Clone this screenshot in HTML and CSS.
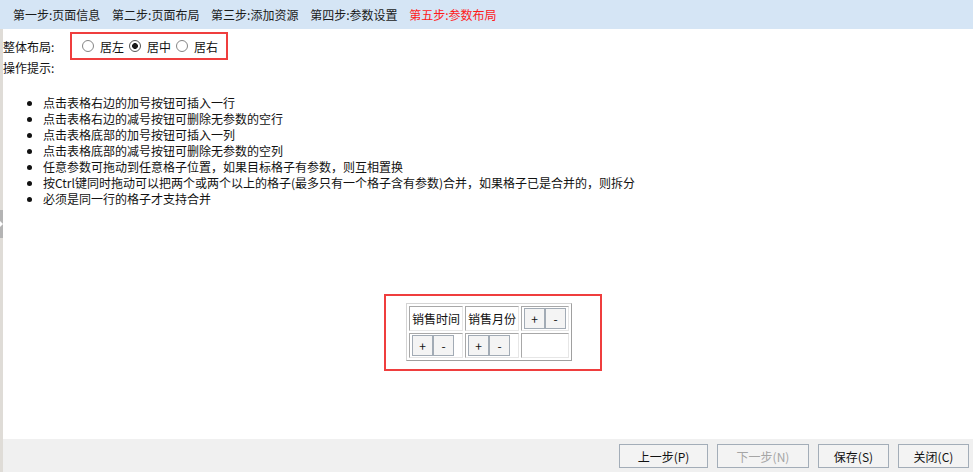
FILE: index.html
```html
<!DOCTYPE html>
<html lang="zh-CN">
<head>
    <meta charset="UTF-8">
    <meta name="viewport" content="width=device-width, initial-scale=1.0">
    <title>参数布局</title>
    <link rel="stylesheet" href="styles.css">
</head>
<body>
    <div class="steps">
        <span class="step">第一步:页面信息</span>
        <span class="step">第二步:页面布局</span>
        <span class="step">第三步:添加资源</span>
        <span class="step">第四步:参数设置</span>
        <span class="step current">第五步:参数布局</span>
    </div>

    <div class="frame">
        <div class="splitter"><span class="splitter-handle"></span></div>

        <div class="panel">
            <div class="content">
                <div class="layout-row">
                    <span class="layout-label">整体布局:</span>
                    <div class="mark layout-options">
                        <label><input type="radio" name="align" value="left">居左</label>
                        <label><input type="radio" name="align" value="center" checked>居中</label>
                        <label><input type="radio" name="align" value="right">居右</label>
                    </div>
                </div>

                <div class="tips-title">操作提示:</div>
                <ul class="tips">
                    <li>点击表格右边的加号按钮可插入一行</li>
                    <li>点击表格右边的减号按钮可删除无参数的空行</li>
                    <li>点击表格底部的加号按钮可插入一列</li>
                    <li>点击表格底部的减号按钮可删除无参数的空列</li>
                    <li>任意参数可拖动到任意格子位置，如果目标格子有参数，则互相置换</li>
                    <li>按Ctrl键同时拖动可以把两个或两个以上的格子(最多只有一个格子含有参数)合并，如果格子已是合并的，则拆分</li>
                    <li>必须是同一行的格子才支持合并</li>
                </ul>

                <div class="grid-wrap">
                    <div class="mark grid-mark">
                        <table class="param-grid">
                            <tr>
                                <td>销售时间</td>
                                <td>销售月份</td>
                                <td><div class="ops"><button>+</button><button>-</button></div></td>
                            </tr>
                            <tr>
                                <td><div class="ops"><button>+</button><button>-</button></div></td>
                                <td><div class="ops"><button>+</button><button>-</button></div></td>
                                <td></td>
                            </tr>
                        </table>
                    </div>
                </div>
            </div>

            <div class="footer">
                <button class="btn">上一步(P)</button>
                <button class="btn btn-wide" disabled>下一步(N)</button>
                <button class="btn btn-short">保存(S)</button>
                <button class="btn btn-short">关闭(C)</button>
            </div>
        </div>
    </div>
</body>
</html>
```

FILE: styles.css
```css
html, body {
    height: 100%;
}
body {
    margin: 0;
    display: flex;
    flex-direction: column;
    overflow: hidden;
    font-family: "Noto Sans CJK SC", "Liberation Sans", sans-serif;
    font-size: 12px;
    color: #111;
    background: #fff;
}
.steps {
    height: 29px;
    line-height: 29px;
    padding-left: 13px;
    background-color: #d5e5f5;
    white-space: nowrap;
}
.step {
    margin-right: 9px;
    color: #1a1a1a;
}
.step.current {
    color: #ff1a1a;
}
.frame {
    flex: 1;
    display: flex;
    min-height: 0;
}
.splitter {
    position: relative;
    width: 3px;
    background-color: #dfdcd7;
}
.splitter-handle {
    position: absolute;
    left: 0;
    top: 181px;
    width: 3px;
    height: 28px;
    background-color: #b4b4b4;
}
.splitter-handle::after {
    content: "";
    position: absolute;
    left: 0;
    top: 11px;
    border-left: 3px solid #fff;
    border-top: 3px solid transparent;
    border-bottom: 3px solid transparent;
}
.panel {
    flex: 1;
    display: flex;
    flex-direction: column;
}
.content {
    flex: 1;
}
.mark {
    border: 2px solid #ef3e3e;
}
.layout-row {
    display: flex;
    align-items: center;
    margin-top: 3px;
}
.layout-label {
    width: 67px;
}
.layout-options {
    display: flex;
    align-items: center;
    height: 24px;
    padding: 0 8px 0 10px;
}
.layout-options label {
    display: flex;
    align-items: center;
    gap: 6px;
    margin-right: 5px;
}
.layout-options label:last-child {
    margin-right: 0;
}
.layout-options input[type="radio"] {
    appearance: none;
    width: 12px;
    height: 12px;
    margin: 0;
    border: 1px solid #858585;
    border-radius: 50%;
    background: #fff;
}
.layout-options input[type="radio"]:checked {
    border-color: #555;
    background: radial-gradient(circle, #1a1a1a 0 2.6px, #fff 3.2px);
}
.tips-title {
    line-height: 16px;
}
.tips {
    margin: 19px 0 0;
    padding-left: 40px;
    line-height: 16px;
}
.grid-wrap {
    display: flex;
    justify-content: center;
    padding-left: 10px;
    margin-top: 87px;
}
.grid-mark {
    padding: 7px 28px 8px 20px;
}
.param-grid {
    border: 1px solid;
    border-color: #d4d4d4 #a0a0a0 #a0a0a0 #d4d4d4;
    border-spacing: 2px;
}
.param-grid td {
    border: 1px solid;
    border-color: #a8a8a8 #e6e6e6 #e6e6e6 #a8a8a8;
    padding: 1px 2px;
    height: 21px;
    line-height: 19px;
    white-space: nowrap;
}
.ops {
    display: flex;
}
.ops button {
    width: 21px;
    height: 21px;
    padding: 0;
    border: 1px solid #a2abb5;
    background-color: #f4f4f4;
    font: 12px "Noto Sans CJK SC", "Liberation Sans", sans-serif;
    line-height: 17px;
    color: #111;
}
.footer {
    height: 33px;
    box-sizing: border-box;
    padding: 5px 4px 0 0;
    display: flex;
    justify-content: flex-end;
    align-items: flex-start;
    gap: 9px;
    background-color: #f0f0f0;
}
.btn {
    width: 89px;
    height: 24px;
    padding: 0;
    border: 1px solid #a3adb8;
    background-color: #f3f3f3;
    font: 12px "Noto Sans CJK SC", "Liberation Sans", sans-serif;
    color: #111;
}
.btn-wide {
    width: 92px;
}
.btn-short {
    width: 71px;
}
.btn:disabled {
    color: #a5a5a5;
}
```
